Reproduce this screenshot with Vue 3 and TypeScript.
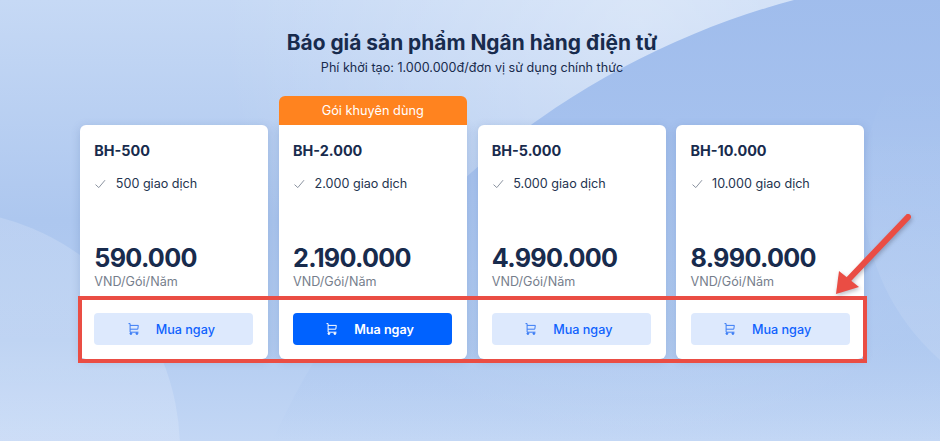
<script setup lang="ts">
interface Plan {
  name: string
  quota: string
  price: string
  featured?: boolean
}

const plans: Plan[] = [
  { name: 'BH-500', quota: '500 giao dịch', price: '590.000' },
  { name: 'BH-2.000', quota: '2.000 giao dịch', price: '2.190.000', featured: true },
  { name: 'BH-5.000', quota: '5.000 giao dịch', price: '4.990.000' },
  { name: 'BH-10.000', quota: '10.000 giao dịch', price: '8.990.000' },
]
</script>

<template>
  <div class="page">
    <div class="blob blob-dark" />
    <div class="blob blob-left" />
    <div class="blob blob-right" />

    <header class="head">
      <h1>Báo giá sản phẩm Ngân hàng điện tử</h1>
      <p>Phí khởi tạo: 1.000.000đ/đơn vị sử dụng chính thức</p>
    </header>

    <section class="plans">
      <article v-for="plan in plans" :key="plan.name" class="card">
        <div v-if="plan.featured" class="ribbon">Gói khuyên dùng</div>
        <h2>{{ plan.name }}</h2>
        <div class="quota">
          <svg width="12" height="10" viewBox="0 0 12 10" fill="none" stroke="#8b93a0" stroke-width="1">
            <path d="M1.5 5.6 4.8 8.6 11 1.2" />
          </svg>
          <span>{{ plan.quota }}</span>
        </div>
        <div class="price">{{ plan.price }}</div>
        <div class="unit">VND/Gói/Năm</div>
        <button class="buy" :class="{ solid: plan.featured }" type="button">
          <svg width="11" height="12" viewBox="0 0 11 12" fill="none" stroke="currentColor" stroke-width="1">
            <path d="M.5.6h1.6v8.6h8.4M2.1 2.4h8.2l-.5 3.8H2.1" />
            <circle cx="2.9" cy="10.6" r=".9" fill="currentColor" />
            <circle cx="8.9" cy="10.6" r=".9" fill="currentColor" />
          </svg>
          <span>Mua ngay</span>
        </button>
      </article>
    </section>

    <div class="highlight" />
    <svg class="arrow" width="90" height="90" viewBox="0 0 90 90">
      <path d="M80 6 20 69" stroke="#ea4d44" stroke-width="6" stroke-linecap="round" fill="none" />
      <path d="M8 83 11 60 31 76Z" fill="#ea4d44" />
    </svg>
  </div>
</template>

<style>
html,
body {
  margin: 0;
  background: #bcd2f3;
}
</style>

<style scoped>
.page {
  position: relative;
  box-sizing: border-box;
  width: 940px;
  height: 441px;
  padding: 30px 76px 0 80px;
  overflow: hidden;
  background:
    radial-gradient(circle at 640px 20px, rgba(255, 255, 255, 0.35), rgba(255, 255, 255, 0) 420px),
    linear-gradient(180deg, #c6d9f5 0, #adc7ef 220px, #b3ccf1 340px, #c3d7f5 441px);
  font-family: Inter, "Noto Sans", sans-serif;
  color: #182b4d;
}

.blob {
  position: absolute;
  border-radius: 50%;
}

.blob-dark {
  left: 200px;
  top: -27px;
  width: 1600px;
  height: 1600px;
  background: linear-gradient(
    180deg,
    #9fbcec 0,
    #a5c1ee 150px,
    rgba(172, 199, 240, 0.8) 300px,
    rgba(180, 205, 241, 0) 468px
  );
}

.blob-left {
  left: -300px;
  top: 210px;
  width: 480px;
  height: 480px;
  background: linear-gradient(180deg, rgba(255, 255, 255, 0.17), rgba(255, 255, 255, 0.16) 50%);
}

.blob-right {
  left: 863px;
  top: -36px;
  width: 452px;
  height: 452px;
  background: linear-gradient(180deg, rgba(255, 255, 255, 0) 25%, rgba(255, 255, 255, 0.1) 80%);
}

.head {
  position: relative;
  text-align: center;
}

.head h1 {
  margin: 0;
  font-size: 20.9px;
  line-height: 25px;
  font-weight: 700;
}

.head p {
  margin: 4px 0 0;
  font-size: 12.6px;
  line-height: 18px;
}

.plans {
  position: relative;
  display: grid;
  grid-template-columns: repeat(4, 188px);
  column-gap: 10.75px;
  margin-top: 48px;
}

.card {
  position: relative;
  display: flex;
  flex-direction: column;
  height: 234px;
  box-sizing: border-box;
  padding: 17px 15px 0 14.3px;
  background: #fff;
  border-radius: 6px;
  box-shadow: 0 2px 10px rgba(60, 90, 150, 0.22);
}

.card:has(.ribbon) {
  border-radius: 0 0 6px 6px;
}

.ribbon {
  position: absolute;
  left: 0;
  right: 0;
  top: -29px;
  height: 29px;
  background: #ff831f;
  border-radius: 6px 6px 0 0;
  color: #fff;
  font-size: 12.75px;
  line-height: 29px;
  text-align: center;
}

.card h2 {
  margin: 0;
  font-size: 14.4px;
  line-height: 18px;
  font-weight: 700;
}

.quota {
  display: flex;
  align-items: center;
  gap: 9.5px;
  margin-top: 15px;
  font-size: 12.6px;
  line-height: 18px;
  color: #24344f;
}

.price {
  margin-top: 49.5px;
  font-size: 25.2px;
  line-height: 30px;
  font-weight: 700;
  letter-spacing: -0.7px;
}

.unit {
  margin-top: 1.5px;
  font-size: 12.6px;
  line-height: 16px;
  color: #767e8c;
}

.buy {
  display: flex;
  align-items: center;
  justify-content: center;
  gap: 17px;
  width: 159px;
  height: 32px;
  margin-top: 23px;
  padding: 0 5px 0 0;
  border: 0;
  border-radius: 4px;
  background: #dde9fd;
  color: #0f62fe;
  font-family: inherit;
  font-size: 12.6px;
  font-weight: 500;
}

.buy svg {
  color: #3a7cf5;
}

.buy.solid {
  background: #0062ff;
  color: #fff;
  font-weight: 600;
}

.buy.solid svg {
  color: #fff;
}

.highlight {
  position: absolute;
  left: 78px;
  top: 296px;
  width: 781px;
  height: 59px;
  border: 4px solid #ea4d44;
}

.arrow {
  position: absolute;
  left: 828px;
  top: 211px;
  filter: drop-shadow(1px 2px 2px rgba(60, 60, 80, 0.35));
}
</style>
